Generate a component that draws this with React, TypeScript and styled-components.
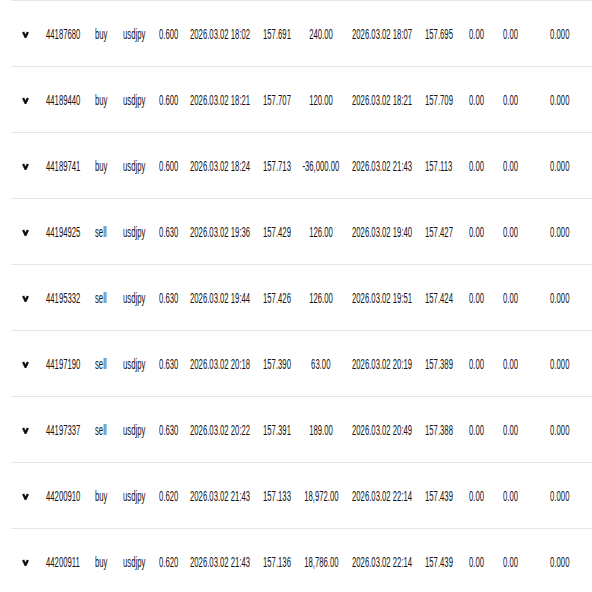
import React from "react";
import styled, { createGlobalStyle } from "styled-components";

const Global = createGlobalStyle`
  html, body { margin: 0; padding: 0; background: #ffffff; }
  body { font-family: "Liberation Sans", Arial, sans-serif; overflow: hidden; }
`;

type Align = "left" | "center";
type Col = { width: string; align: Align; pad?: number };

const COLS: Col[] = [
  { width: "35px", align: "left", pad: 11 },
  { width: "49px", align: "left" },
  { width: "28px", align: "left" },
  { width: "36px", align: "left" },
  { width: "31px", align: "left" },
  { width: "73px", align: "left" },
  { width: "33px", align: "left" },
  { width: "50px", align: "center" },
  { width: "79px", align: "left", pad: 6 },
  { width: "44px", align: "left" },
  { width: "34px", align: "left" },
  { width: "27px", align: "left" },
  { width: "60px", align: "center" },
];

type Trade = {
  id: string;
  side: string;
  symbol: string;
  volume: string;
  openTime: string;
  openPrice: string;
  profit: string;
  closeTime: string;
  closePrice: string;
  swap: string;
  commission: string;
  fee: string;
};

const mk = (
  id: string,
  side: string,
  volume: string,
  openTime: string,
  openPrice: string,
  profit: string,
  closeTime: string,
  closePrice: string
): Trade => ({
  id,
  side,
  symbol: "usdjpy",
  volume,
  openTime,
  openPrice,
  profit,
  closeTime,
  closePrice,
  swap: "0.00",
  commission: "0.00",
  fee: "0.000",
});

const TRADES: Trade[] = [
  mk("44187680", "buy", "0.600", "2026.03.02 18:02", "157.691", "240.00", "2026.03.02 18:07", "157.695"),
  mk("44189440", "buy", "0.600", "2026.03.02 18:21", "157.707", "120.00", "2026.03.02 18:21", "157.709"),
  mk("44189741", "buy", "0.600", "2026.03.02 18:24", "157.713", "-36,000.00", "2026.03.02 21:43", "157.113"),
  mk("44194925", "sell", "0.630", "2026.03.02 19:36", "157.429", "126.00", "2026.03.02 19:40", "157.427"),
  mk("44195332", "sell", "0.630", "2026.03.02 19:44", "157.426", "126.00", "2026.03.02 19:51", "157.424"),
  mk("44197190", "sell", "0.630", "2026.03.02 20:18", "157.390", "63.00", "2026.03.02 20:19", "157.389"),
  mk("44197337", "sell", "0.630", "2026.03.02 20:22", "157.391", "189.00", "2026.03.02 20:49", "157.388"),
  mk("44200910", "buy", "0.620", "2026.03.02 21:43", "157.133", "18,972.00", "2026.03.02 22:14", "157.439"),
  mk("44200911", "buy", "0.620", "2026.03.02 21:43", "157.136", "18,786.00", "2026.03.02 22:14", "157.439"),
];

const Table = styled.div`
  margin-left: 11px;
  display: flex;
  flex-direction: column;
`;

const Row = styled.div`
  display: grid;
  grid-template-columns: ${COLS.map((c) => c.width).join(" ")} 1fr;
  height: 66px;
  box-sizing: border-box;
  border-top: 1px solid #e6e6e8;
  align-items: center;
`;

const Cell = styled.div<{ $align: Align; $pad: number }>`
  display: flex;
  align-items: center;
  justify-content: ${(p) => (p.$align === "center" ? "center" : "flex-start")};
  padding-left: ${(p) => p.$pad}px;
  min-width: 0;
  height: 100%;
  box-sizing: border-box;
`;

const Text = styled.span<{ $align: Align }>`
  display: inline-block;
  flex-shrink: 0;
  white-space: nowrap;
  font-size: 15px;
  line-height: 17px;
  color: #141418;
  transform: scaleX(0.515);
  transform-origin: ${(p) => (p.$align === "center" ? "center" : "left")} center;
`;

const Chevron = styled.svg`
  display: block;
  width: 7px;
  height: 7px;
  margin-top: 2px;
`;

const ToggleIcon = () => (
  <Chevron viewBox="0 0 7 7">
    <polyline
      points="1.1,1 3.5,6 5.9,1"
      fill="none"
      stroke="#10101a"
      strokeWidth="2.3"
      strokeLinecap="butt"
      strokeLinejoin="miter"
    />
  </Chevron>
);

export default function App() {
  return (
    <>
      <Global />
      <Table>
        {TRADES.map((t) => {
          const values = [
            t.id,
            t.side,
            t.symbol,
            t.volume,
            t.openTime,
            t.openPrice,
            t.profit,
            t.closeTime,
            t.closePrice,
            t.swap,
            t.commission,
            t.fee,
          ];
          return (
            <Row key={t.id}>
              <Cell $align="left" $pad={COLS[0].pad ?? 0}>
                <ToggleIcon />
              </Cell>
              {values.map((v, i) => {
                const col = COLS[i + 1];
                return (
                  <Cell key={i} $align={col.align} $pad={col.pad ?? 0}>
                    <Text $align={col.align}>{v}</Text>
                  </Cell>
                );
              })}
              <div />
            </Row>
          );
        })}
      </Table>
    </>
  );
}
